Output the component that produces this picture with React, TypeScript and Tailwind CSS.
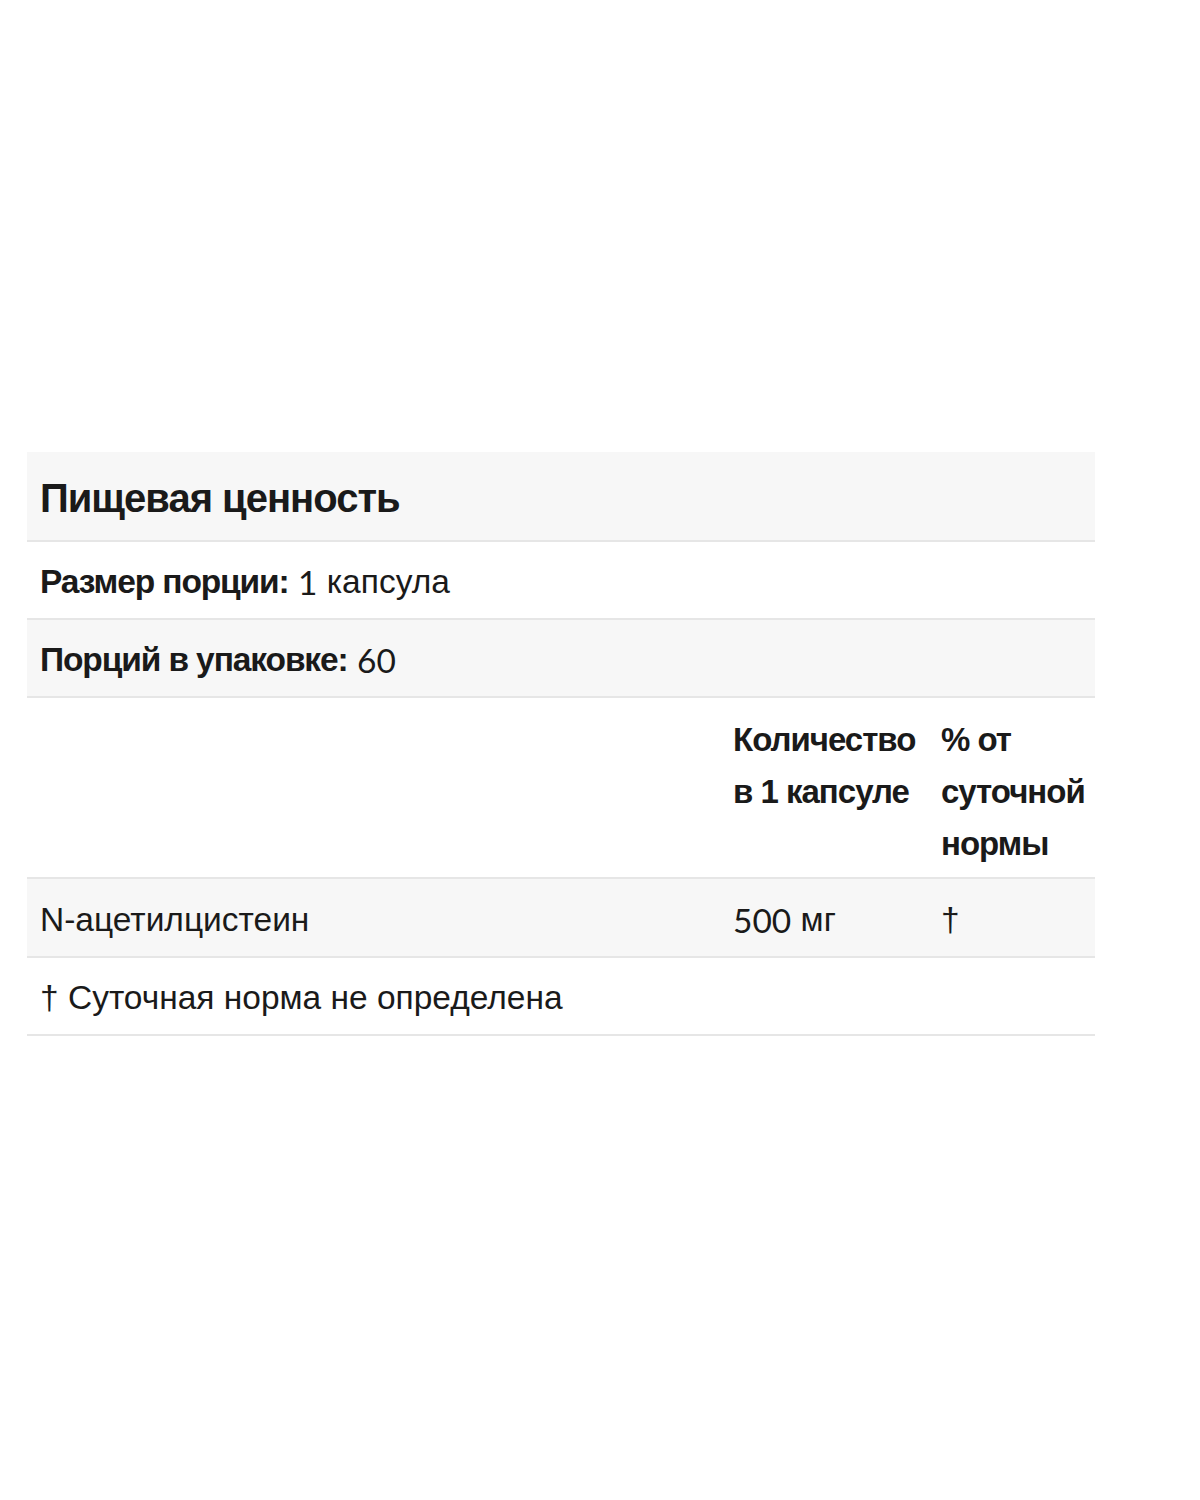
export default function App() {
    const cell = 'px-[13px] pt-[5px] flex items-center'
    const num = "font-['Lato',sans-serif]"
    return (
        <div className="w-[1200px] h-[1500px] bg-white font-['Liberation_Sans','Arial',sans-serif] text-[#1a1a1a]">
            <div className="pt-[452px] pl-[27px]">
                <div className="w-[1068px]">
                    {/* Title */}
                    <div className="h-[90px] bg-[#f7f7f7] border-b-2 border-[#e6e6e6] px-[13px] flex items-center">
                        <h2 className="text-[40px] font-bold tracking-[-1px] leading-none pt-[3px]">Пищевая ценность</h2>
                    </div>

                    <div className="h-[78px] bg-white border-b-2 border-[#e6e6e6] px-[13px] pt-[5px] flex items-center text-[33.5px]">
                        <span className="font-bold tracking-[-1.1px]">Размер порции:</span>&nbsp;<span className={num}>1</span>&nbsp;капсула
                    </div>

                    <div className="h-[78px] bg-[#f7f7f7] border-b-2 border-[#e6e6e6] px-[13px] pt-[5px] flex items-center text-[33.5px]">
                        <span className="font-bold tracking-[-1.1px]">Порций в упаковке:</span>&nbsp;<span className={num}>60</span>
                    </div>

                    {/* Column headers */}
                    <div className="grid grid-cols-[693px_208px_167px] h-[181px] bg-white border-b-2 border-[#e6e6e6] text-[33px] font-bold leading-[52px] tracking-[-1px]">
                        <div />
                        <div className="pl-[13px] pt-[16px]">Количество в&nbsp;1&nbsp;капсуле</div>
                        <div className="pl-[13px] pt-[16px]">% от суточной нормы</div>
                    </div>

                    <div className="grid grid-cols-[693px_208px_167px] h-[79px] bg-[#f7f7f7] border-b-2 border-[#e6e6e6] text-[33.5px]">
                        <div className={cell}>N-ацетилцистеин</div>
                        <div className={cell}><span className={num}>500</span>&nbsp;мг</div>
                        <div className={cell}>†</div>
                    </div>

                    <div className="h-[78px] bg-white border-b-2 border-[#e6e6e6] px-[13px] pt-[5px] flex items-center text-[33.5px]">
                        † Суточная норма не определена
                    </div>
                </div>
            </div>
        </div>
    )
}
